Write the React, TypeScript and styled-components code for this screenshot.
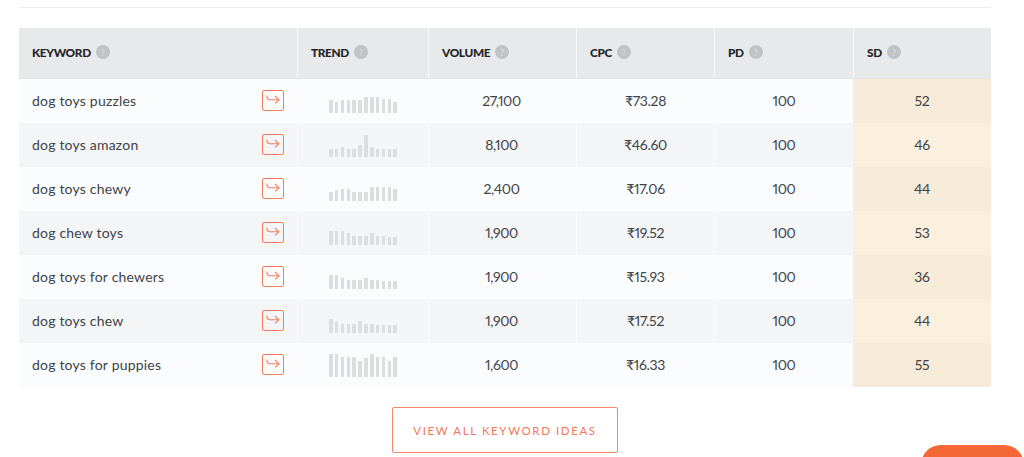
import React from 'react'
import styled, { createGlobalStyle } from 'styled-components'

const GlobalStyle = createGlobalStyle`
  html, body {
    margin: 0;
    padding: 0;
    background: #fff;
    overflow: hidden;
  }
  body {
    font-family: Lato, "Noto Sans", sans-serif;
  }
`

const COLUMNS = '278px 131px 148px 138px 139px 138px'

const rows = [
  { keyword: 'dog toys puzzles', volume: '27,100', cpc: '₹73.28', pd: '100', sd: '52', bars: [13, 11, 13, 13, 13, 13, 16, 16, 16, 14, 14, 11] },
  { keyword: 'dog toys amazon', volume: '8,100', cpc: '₹46.60', pd: '100', sd: '46', bars: [8, 8, 10, 8, 8, 12, 22, 10, 8, 8, 8, 8] },
  { keyword: 'dog toys chewy', volume: '2,400', cpc: '₹17.06', pd: '100', sd: '44', bars: [9, 11, 12, 12, 9, 9, 9, 14, 14, 14, 14, 12] },
  { keyword: 'dog chew toys', volume: '1,900', cpc: '₹19.52', pd: '100', sd: '53', bars: [14, 14, 14, 12, 9, 9, 9, 12, 9, 9, 8, 8] },
  { keyword: 'dog toys for chewers', volume: '1,900', cpc: '₹15.93', pd: '100', sd: '36', bars: [14, 14, 11, 9, 9, 9, 11, 9, 9, 8, 8, 8] },
  { keyword: 'dog toys chew', volume: '1,900', cpc: '₹17.52', pd: '100', sd: '44', bars: [14, 12, 9, 9, 9, 12, 9, 9, 8, 8, 8, 8] },
  { keyword: 'dog toys for puppies', volume: '1,600', cpc: '₹16.33', pd: '100', sd: '55', bars: [23, 23, 20, 20, 20, 16, 19, 23, 20, 20, 16, 20] },
]

const headers = ['KEYWORD', 'TREND', 'VOLUME', 'CPC', 'PD', 'SD']

const Page = styled.div`
  position: relative;
  width: 1024px;
  height: 457px;
  overflow: hidden;
  box-sizing: border-box;
  padding: 7px 33px 0 19px;
`

const TopRule = styled.div`
  height: 1px;
  background: #ececee;
  margin-bottom: 20px;
`

const Table = styled.div`
  display: flex;
  flex-direction: column;
`

const HeaderRow = styled.div`
  display: grid;
  grid-template-columns: ${COLUMNS};
  height: 51px;
  background: #e7e9ea;
  border-bottom: 1px solid #e1e3e4;
  box-sizing: border-box;
`

const HeaderCell = styled.div<{ $first?: boolean }>`
  display: flex;
  align-items: center;
  gap: 5px;
  padding: 0 0 2px 13px;
  border-left: ${(props) => (props.$first ? 'none' : '1px solid #f7f8f8')};
  font-size: 11.8px;
  font-weight: 900;
  letter-spacing: -0.35px;
  color: #1f2326;
`

const HelpDot = styled.span`
  display: flex;
  align-items: center;
  justify-content: center;
  width: 14px;
  height: 14px;
  border-radius: 50%;
  background: #bfc3c5;
  color: #d8dadb;
  font-size: 9px;
  font-weight: 700;
`

const Row = styled.div<{ $alt: boolean }>`
  display: grid;
  grid-template-columns: ${COLUMNS};
  height: 44px;
  background: ${(props) => (props.$alt ? '#f4f5f6' : '#fbfcfe')};
  font-size: 14px;
  color: #3e4347;
`

const Cell = styled.div<{ $first?: boolean }>`
  display: flex;
  align-items: center;
  justify-content: center;
  padding-bottom: 2px;
  border-left: ${(props) => (props.$first ? 'none' : '1px solid #fafbfc')};
  font-variant-numeric: proportional-nums;
  letter-spacing: -0.3px;
`

const KeywordCell = styled(Cell)`
  justify-content: space-between;
  padding: 0 13px 2px 13px;
  letter-spacing: 0.2px;
`

const GoButton = styled.span`
  display: flex;
  align-items: center;
  justify-content: center;
  width: 22px;
  height: 21px;
  box-sizing: border-box;
  border: 1.5px solid #f47c5c;
  border-radius: 2px;
`

const TrendCell = styled(Cell)`
  padding-bottom: 0;
`

const Bars = styled.div`
  display: flex;
  align-items: flex-end;
  gap: 2.36px;
  height: 24px;
  margin-top: -1px;
`

const Bar = styled.span`
  display: block;
  width: 3.5px;
  background: #dcdddd;
`

const VolumeCell = styled(Cell)`
  padding-right: 2px;
  letter-spacing: -0.4px;
`

const SdCell = styled(Cell)<{ $alt: boolean }>`
  background: ${(props) => (props.$alt ? '#fbf0de' : '#f6ead8')};
  border-left: none;
`

const Footer = styled.div`
  display: flex;
  justify-content: center;
  padding-top: 20px;
`

const ViewAllButton = styled.a`
  display: flex;
  align-items: center;
  justify-content: center;
  width: 226px;
  height: 46px;
  box-sizing: border-box;
  border: 1px solid #f5876a;
  border-radius: 2px;
  color: #f3775a;
  font-size: 11.5px;
  font-weight: 400;
  letter-spacing: 1.6px;
`

const ChatBubble = styled.div`
  position: absolute;
  left: 921px;
  top: 445px;
  width: 103px;
  height: 40px;
  border-radius: 22px;
  background: #f46737;
`

const GoIcon = () => (
  <svg width="14" height="10" viewBox="0 0 14 10" fill="none" stroke="#f47c5c" strokeWidth="1.1">
    <path d="M0.8 0.5c0 2.6 1.2 4.2 3.6 4.2H13" />
    <path d="M9 1l4 3.7L9 8.4" />
  </svg>
)

export default function App() {
  return (
    <Page>
      <GlobalStyle />
      <TopRule />
      <Table>
        <HeaderRow>
          {headers.map((title, i) => (
            <HeaderCell key={title} $first={i === 0}>
              {title}
              <HelpDot>?</HelpDot>
            </HeaderCell>
          ))}
        </HeaderRow>
        {rows.map((row, i) => {
          const alt = i % 2 === 1
          return (
            <Row key={row.keyword} $alt={alt}>
              <KeywordCell $first>
                <span>{row.keyword}</span>
                <GoButton>
                  <GoIcon />
                </GoButton>
              </KeywordCell>
              <TrendCell>
                <Bars>
                  {row.bars.map((h, j) => (
                    <Bar key={j} style={{ height: h }} />
                  ))}
                </Bars>
              </TrendCell>
              <VolumeCell>{row.volume}</VolumeCell>
              <Cell>{row.cpc}</Cell>
              <Cell>{row.pd}</Cell>
              <SdCell $alt={alt}>{row.sd}</SdCell>
            </Row>
          )
        })}
      </Table>
      <Footer>
        <ViewAllButton>VIEW ALL KEYWORD IDEAS</ViewAllButton>
      </Footer>
      <ChatBubble />
    </Page>
  )
}
